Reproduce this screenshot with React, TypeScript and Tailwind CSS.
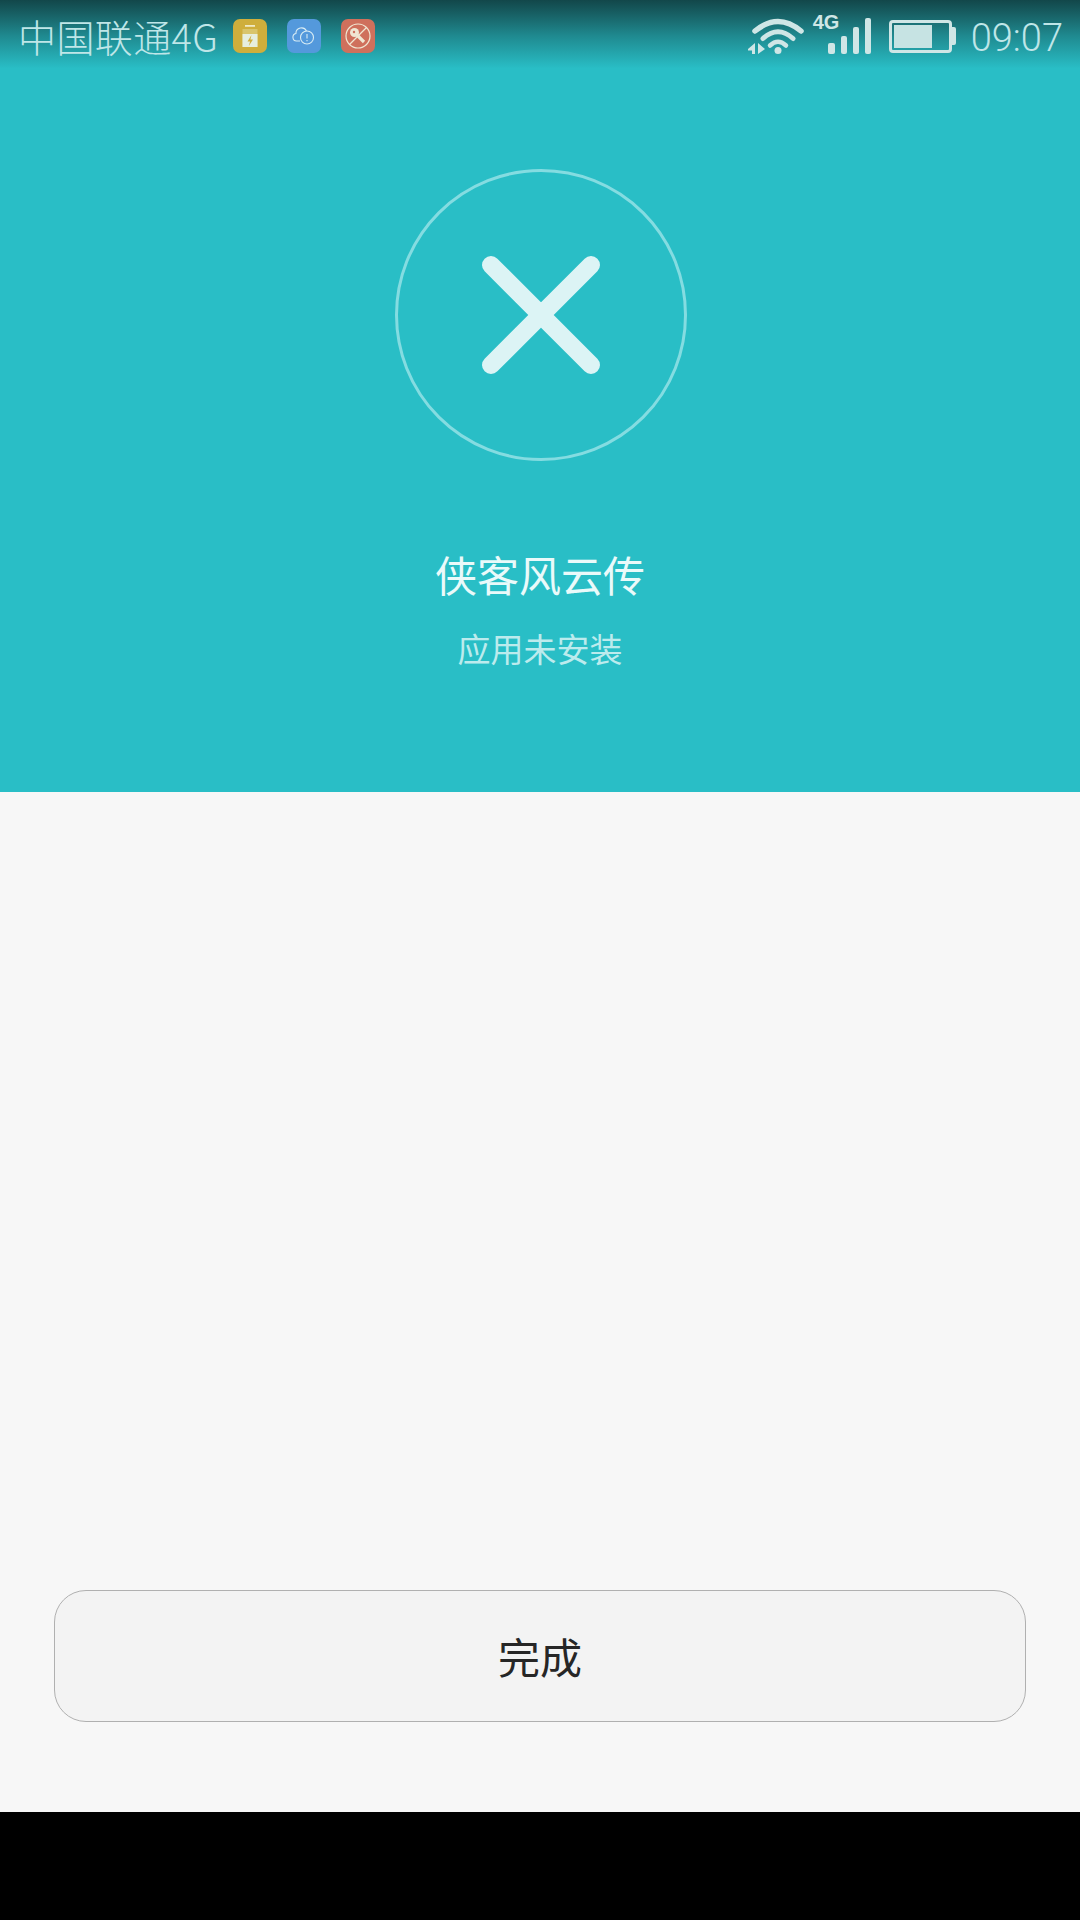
const cjk = { fontFamily: '"Noto Sans CJK SC", "Noto Sans", sans-serif' };

const BatteryAppIcon = () => (
    <div className="w-[34px] h-[34px] rounded-[7px] bg-[#cfae3c] flex items-center justify-center">
        <svg width="34" height="34" viewBox="0 0 34 34">
            <rect x="12" y="6" width="10" height="1.8" fill="#efe9c4" />
            <path d="M9.5 10h15v18h-15z" fill="#d9c56c" />
            <path d="M9.5 15h15v13h-15z" fill="#e6eedf" />
            <path d="M18.5 16l-4 6.5h2.6L15.8 27l4.2-6.6h-2.6z" fill="#cfae3c" />
        </svg>
    </div>
);

const CloudAppIcon = () => (
    <div className="w-[34px] h-[34px] rounded-[7px] bg-[#5499dc] flex items-center justify-center">
        <svg width="34" height="34" viewBox="0 0 34 34" fill="none" stroke="#d8ecf4" strokeWidth="1.1">
            <path d="M13 22H9.5a3.8 3.8 0 0 1-.6-7.5A5.6 5.6 0 0 1 19.5 12" />
            <circle cx="20" cy="18.5" r="6.5" />
            <path d="M20 15v4.5M20 21v1.2" />
        </svg>
    </div>
);

const KeyAppIcon = () => (
    <div className="w-[34px] h-[34px] rounded-[7px] bg-[#cf705c] flex items-center justify-center">
        <svg width="34" height="34" viewBox="0 0 34 34" fill="none">
            <circle cx="17" cy="17" r="12" stroke="#f0e6d2" strokeWidth="1.2" />
            <path d="M25.5 8.5l-17 17" stroke="#f0e6d2" strokeWidth="1.2" />
            <circle cx="13.5" cy="13.5" r="4.5" fill="#f0e6d2" />
            <path d="M16 16l7 7" stroke="#f0e6d2" strokeWidth="3.2" />
            <circle cx="13" cy="13" r="1.2" fill="#cf705c" />
        </svg>
    </div>
);

const WifiIcon = () => (
    <svg width="56" height="36" viewBox="0 0 56 36" fill="none">
        <path d="M7 13Q30 -6 53 13" stroke="#cfe6e6" strokeWidth="5.5" strokeLinecap="round" />
        <path d="M15 20.5Q30 7 45 20.5" stroke="#cfe6e6" strokeWidth="5" strokeLinecap="round" />
        <path d="M22 27.5Q30 20 38 27.5" stroke="#cfe6e6" strokeWidth="4.5" strokeLinecap="round" />
        <circle cx="30" cy="32.5" r="3.5" fill="#cfe6e6" />
        <path d="M0 31L7 25V36H4V32.5H0zM10 25L17 31L10 36z" fill="#cfe6e6" />
    </svg>
);

const SignalIcon = () => (
    <div className="relative w-[58px] h-[36px] flex items-end justify-end gap-[6px]">
        <span className="absolute left-0 top-[-7px] text-[20px] leading-[22px] font-bold text-[#cfe6e6]" style={{ fontFamily: '"Liberation Sans", sans-serif' }}>4G</span>
        <div className="w-[7px] h-[11px] rounded-[2px] bg-[#cfe6e6]" />
        <div className="w-[6px] h-[18px] rounded-[2px] bg-[#cfe6e6]" />
        <div className="w-[6px] h-[27px] rounded-[2px] bg-[#cfe6e6]" />
        <div className="w-[6px] h-[36px] rounded-[2px] bg-[#cfe6e6]" />
    </div>
);

const BatteryIcon = () => (
    <div className="flex items-center">
        <div className="w-[63px] h-[33px] rounded-[4px] border-[3px] border-[#cfe6e6] p-[2px]">
            <div className="w-[38px] h-full bg-[#c6e3e3]" />
        </div>
        <div className="w-[4px] h-[18px] rounded-r-[2px] bg-[#cfe6e6]" />
    </div>
);

const StatusBar = () => (
    <div className="h-[72px] flex items-center pl-[18px] pr-[17px] bg-gradient-to-b from-[#12474a] via-[#1f8a90] via-50% to-[#29bec6] to-95%">
        <span className="text-[38px] leading-[72px] font-light text-[#bfe6e8] tracking-[0.4px]" style={cjk}>中国联通4G</span>
        <div className="flex items-center gap-[20px] ml-[15px]">
            <BatteryAppIcon />
            <CloudAppIcon />
            <KeyAppIcon />
        </div>
        <div className="ml-auto flex items-center">
            <WifiIcon />
            <div className="ml-[9px]"><SignalIcon /></div>
            <div className="ml-[18px]"><BatteryIcon /></div>
            <span className="ml-[15px] pt-[4px] text-[38px] leading-[72px] font-light text-[#bfe6e8]" style={{ fontFamily: 'Roboto, sans-serif' }}>09:07</span>
        </div>
    </div>
);

const App = () =>
{
    return (
        <div className="w-[1080px] h-[1920px] flex flex-col bg-black overflow-hidden" style={cjk}>
            <div className="h-[792px] flex flex-col bg-[#29bec6]">
                <StatusBar />
                <div className="flex flex-col items-center pt-[97px]">
                    <div className="w-[292px] h-[292px] ml-[1px] rounded-full border-[3px] border-[#84dce1] flex items-center justify-center">
                        <svg width="122" height="122" viewBox="0 0 122 122">
                            <path d="M11 11L111 111M111 11L11 111" stroke="#dcf4f5" strokeWidth="18" strokeLinecap="round" />
                        </svg>
                    </div>
                    <div className="mt-[83px] text-[42px] leading-[60px] text-[#eafafa]">侠客风云传</div>
                    <div className="mt-[20px] text-[33px] leading-[48px] text-[#bcebed]">应用未安装</div>
                </div>
            </div>
            <div className="h-[1020px] flex flex-col justify-end bg-[#f7f7f7] px-[54px] pb-[90px]">
                <div className="h-[132px] pb-[2px] rounded-[32px] border border-[#b0b0b0] bg-[#f3f3f3] flex items-center justify-center text-[42px] text-[#262626]">
                    完成
                </div>
            </div>
        </div>
    );
};

export default App;
